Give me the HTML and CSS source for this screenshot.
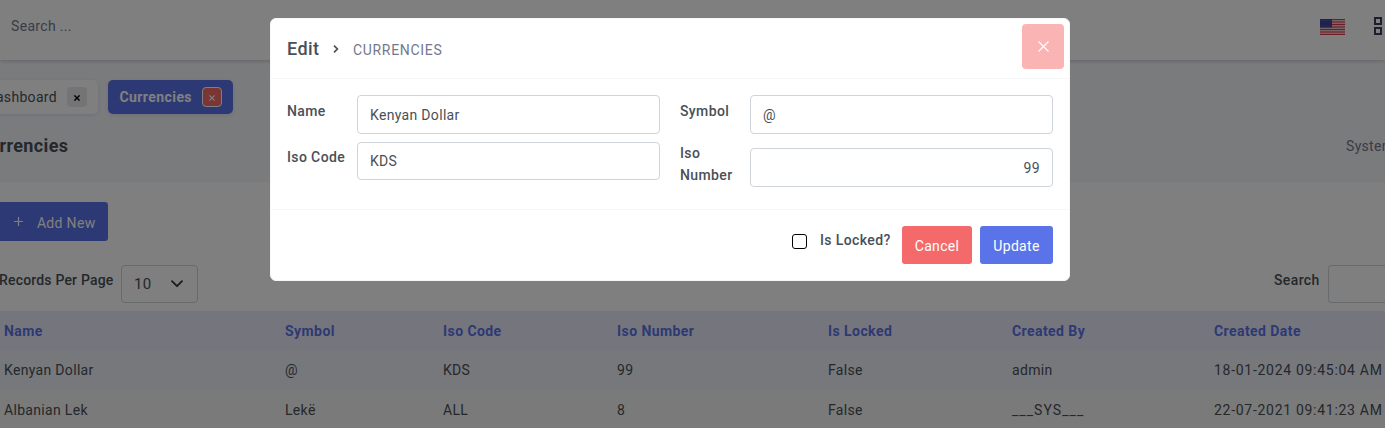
FILE: index.html
```html
<!DOCTYPE html>
<html lang="en">
<head>
<meta charset="utf-8">
<title>Currencies</title>
<link rel="stylesheet" href="styles.css">
</head>
<body>
<div class="page">
  <header class="topbar">
    <span class="topbar-search">Search ...</span>
    <div class="topbar-tools">
      <svg class="flag" width="25" height="16" viewBox="0 0 25 16">
        <rect width="25" height="16" fill="#f3c9cd"/>
        <path d="M0 .5h25M0 3h25M0 5.5h25M0 8h25M0 10.5h25M0 13h25M0 15.5h25" stroke="#d83a47" stroke-width="1.1"/>
        <rect width="12" height="8.5" fill="#41479b"/>
        <path d="M1 1.5h10M1 7h10" stroke="#7478bd" stroke-width=".6" stroke-dasharray="1 1"/>
      </svg>
      <svg class="apps" width="18" height="18" viewBox="0 0 18 18" fill="none" stroke="#3a3f63" stroke-width="2">
        <path d="M2 1h6v6H2zM2 11h6v6H2zM13 1h6v6h-6zM13 11h6v6h-6z"/>
      </svg>
    </div>
  </header>
  <section class="subheader">
    <nav class="tabs">
      <div class="tab"><span class="tab-text">Dashboard</span><button class="tab-close"><svg width="6" height="6" viewBox="0 0 6 6"><path d="M.4.4l5.2 5.2M5.6.4L.4 5.6" stroke="currentColor" stroke-width="1.4"/></svg></button></div>
      <div class="tab tab-active"><span class="tab-text">Currencies</span><button class="tab-close"><svg width="6" height="6" viewBox="0 0 6 6"><path d="M.4.4l5.2 5.2M5.6.4L.4 5.6" stroke="currentColor" stroke-width="1.2"/></svg></button></div>
    </nav>
    <div class="title-row">
      <h1 class="title">Currencies</h1>
      <span class="crumb">System</span>
    </div>
  </section>
  <main class="content">
    <button class="btn btn-primary add-new"><svg class="plus" width="9" height="9" viewBox="0 0 9 9"><path d="M4.5 0v9M0 4.5h9" stroke="#fff" stroke-width="1.2"/></svg><span>Add New</span></button>
    <div class="filters">
      <div class="records">
        <label class="label label-records">Records Per Page</label>
        <div class="select"><span>10</span><svg width="12" height="8" viewBox="0 0 12 8"><path d="M1 1.2l5 5 5-5" fill="none" stroke="#343a40" stroke-width="1.9" stroke-linecap="round" stroke-linejoin="round"/></svg></div>
      </div>
      <div class="find">
        <label class="label">Search</label>
        <div class="find-box"></div>
      </div>
    </div>
    <div class="table">
      <div class="row row-head"><span>Name</span><span>Symbol</span><span>Iso Code</span><span>Iso Number</span><span>Is Locked</span><span>Created By</span><span>Created Date</span></div>
      <div class="row row-hover"><span>Kenyan Dollar</span><span>@</span><span>KDS</span><span>99</span><span>False</span><span>admin</span><span class="date">18-01-2024 09:45:04 AM</span></div>
      <div class="row row-stripe"><span>Albanian Lek</span><span>Lekë</span><span>ALL</span><span>8</span><span>False</span><span class="sys">___SYS___</span><span class="date">22-07-2021 09:41:23 AM</span></div>
    </div>
  </main>
</div>
<div class="overlay">
  <div class="modal">
    <div class="modal-head">
      <span class="modal-title">Edit</span>
      <svg class="chev" width="6" height="8" viewBox="0 0 6 8"><path d="M1 .7L4.4 4 1 7.3" fill="none" stroke="#495057" stroke-width="1.7"/></svg>
      <span class="modal-sub">CURRENCIES</span>
      <button class="modal-close"><svg width="11" height="11" viewBox="0 0 11 11"><path d="M.5.5l10 10M10.5.5l-10 10" stroke="#fff" stroke-width="1.2"/></svg></button>
    </div>
    <div class="modal-body">
      <div class="column">
        <div class="field field-name"><label class="label">Name</label><div class="input">Kenyan Dollar</div></div>
        <div class="field field-code"><label class="label">Iso Code</label><div class="input">KDS</div></div>
      </div>
      <div class="column">
        <div class="field field-name"><label class="label">Symbol</label><div class="input">@</div></div>
        <div class="field field-number"><label class="label">Iso Number</label><div class="input input-number">99</div></div>
      </div>
    </div>
    <div class="modal-foot">
      <label class="check"><input class="check-box" type="checkbox"><span class="label">Is Locked?</span></label>
      <button class="btn btn-danger cancel">Cancel</button>
      <button class="btn btn-primary update">Update</button>
    </div>
  </div>
</div>
</body>
</html>
```
FILE: styles.css
```css
* { box-sizing: border-box; }
body {
  margin: 0;
  height: 428px;
  overflow: hidden;
  font: 400 14px/22px Roboto, "Liberation Sans", sans-serif;
  letter-spacing: 0.32px;
  color: #495057;
  background: #fff;
}
button { font: inherit; letter-spacing: inherit; border: 0; padding: 0; }
svg { display: block; flex: none; }
.page { width: 1385px; height: 428px; overflow: hidden; white-space: nowrap; }

.topbar {
  position: relative;
  display: flex;
  justify-content: space-between;
  height: 60px;
  padding: 15px 0 0 11px;
  background: #fff;
  box-shadow: 0 1px 4px rgba(40, 50, 70, .25);
}
.topbar-search { color: #74788d; }
.topbar-tools { display: flex; width: 65px; gap: 28px; }
.flag { margin-top: 4px; }
.apps { margin-top: 2px; }

.subheader {
  height: 122px;
  padding-top: 20px;
  background: #f5f7fa;
  border-bottom: 1px solid #f0f2f6;
}
.tabs { display: flex; gap: 10px; margin-left: -32px; }
.tab {
  display: flex;
  align-items: center;
  justify-content: flex-end;
  gap: 10px;
  width: 130px;
  height: 34px;
  padding-right: 11px;
  border-radius: 5px;
  background: #fff;
  box-shadow: 0 1px 4px rgba(70, 80, 160, .15);
}
.tab-active { width: 125px; color: #fff; background: #5b73e8; font-weight: 700; letter-spacing: .43px; }
.tab-close {
  display: flex;
  align-items: center;
  justify-content: center;
  width: 20px;
  height: 20px;
  padding-top: 2px;
  border-radius: 4px;
  background: #e9e9ef;
  color: #000;
}
.tab-active .tab-close { border: 1px solid #fff; background: #f46a6a; color: #fff; }
.title-row { display: flex; justify-content: space-between; padding-top: 21px; }
.title { margin: 0 0 0 -23px; font-size: 18px; line-height: 22px; font-weight: 700; letter-spacing: .35px; }
.crumb { width: 39px; color: #74788d; }

.content { padding-top: 20px; }
.btn {
  display: flex;
  align-items: center;
  justify-content: center;
  height: 38px;
  padding: 2px 0 0;
  border-radius: 3px;
  color: #fff;
}
.btn-primary { background: #5b73e8; }
.btn-danger { background: #f46a6a; }
.cancel { width: 70px; }
.update { width: 73px; }
.add-new { height: 39px; gap: 14px; margin-left: -10px; padding-right: 12.5px; width: 118px; justify-content: flex-end; }
.plus { margin-top: -2px; }
.label { font-weight: 500; letter-spacing: .38px; }
.filters { display: flex; justify-content: space-between; padding-top: 24px; }
.records { display: flex; gap: 8px; }
.label-records { width: 114px; margin: 4px 0 0 -1px; letter-spacing: .18px; }
.select {
  display: flex;
  align-items: center;
  justify-content: space-between;
  width: 77px;
  height: 38px;
  padding: 0 14px 0 12px;
  border: 1px solid #ced4da;
  border-radius: 4px;
  font-size: 15px;
}
.find { display: flex; gap: 8px; }
.find .label { margin-top: 4px; width: 46px; }
.find-box { width: 57px; height: 38px; border: 1px solid #ced4da; border-right: 0; border-radius: 4px 0 0 4px; }
.table { margin-top: 8px; }
.row {
  display: grid;
  grid-template-columns: 281px 158px 174px 211px 184px 202px 171px;
  height: 39px;
  padding: 9px 0 0 4px;
}
.row-head { color: #5b73e8; background: #ebebfb; font-weight: 700; letter-spacing: .43px; }
.row-hover { background: #eef0f9; }
.row-stripe { height: 40px; padding-top: 10px; background: #f5f5f5; }
.date { letter-spacing: .71px; }
.sys { letter-spacing: 1.05px; }

.overlay { position: absolute; inset: 0; background: rgba(0, 0, 0, .5); }
.modal {
  width: 800px;
  height: 263px;
  margin: 18px 0 0 270px;
  border: 1px solid #f6f6f6;
  border-radius: 6px;
  background: #fff;
}
.modal-head {
  display: flex;
  align-items: center;
  height: 60px;
  padding: 0 5px 0 16px;
  border-bottom: 1px solid #f5f6f8;
}
.modal-title { width: 46px; font-size: 18px; font-weight: 500; letter-spacing: .4px; }
.chev { margin-top: 1px; }
.modal-sub { margin: 3px 0 0 14px; color: #74788d; letter-spacing: .68px; }
.modal-close {
  display: flex;
  align-items: center;
  justify-content: center;
  width: 42px;
  height: 45px;
  margin: -5px 0 0 auto;
  border-radius: 4px;
  background: #fab4b4;
}
.modal-body { display: flex; gap: 20px; height: 131px; padding: 16px 16px 0; border-bottom: 1px solid #f5f6f8; }
.column { width: 373px; }
.field { display: flex; justify-content: space-between; }
.field .label { width: 62px; margin-top: 5px; }
.field-code { margin-top: 8px; }
.field-code .label { margin-top: 4px; }
.field-code .input { height: 38px; padding-top: 7px; }
.field-number { height: 44px; margin-top: 8px; align-items: flex-end; }
.field-number .label { height: 44px; margin: 0; }
.input {
  width: 303px;
  height: 39px;
  padding: 8px 12px;
  border: 1px solid #ced4da;
  border-radius: 4px;
}
.field-number .input { margin-bottom: -1px; }
.input-number { text-align: right; }
.modal-foot { display: flex; justify-content: flex-end; gap: 8px; padding: 16px 16px 0; }
.check { display: flex; gap: 13px; margin-right: 4px; padding-top: 3px; }
.check .label { width: 70px; white-space: nowrap; }
.check-box { appearance: none; width: 15px; height: 15px; margin: 5px 0 0; border: 1px solid #000; border-radius: 3px; }
```
